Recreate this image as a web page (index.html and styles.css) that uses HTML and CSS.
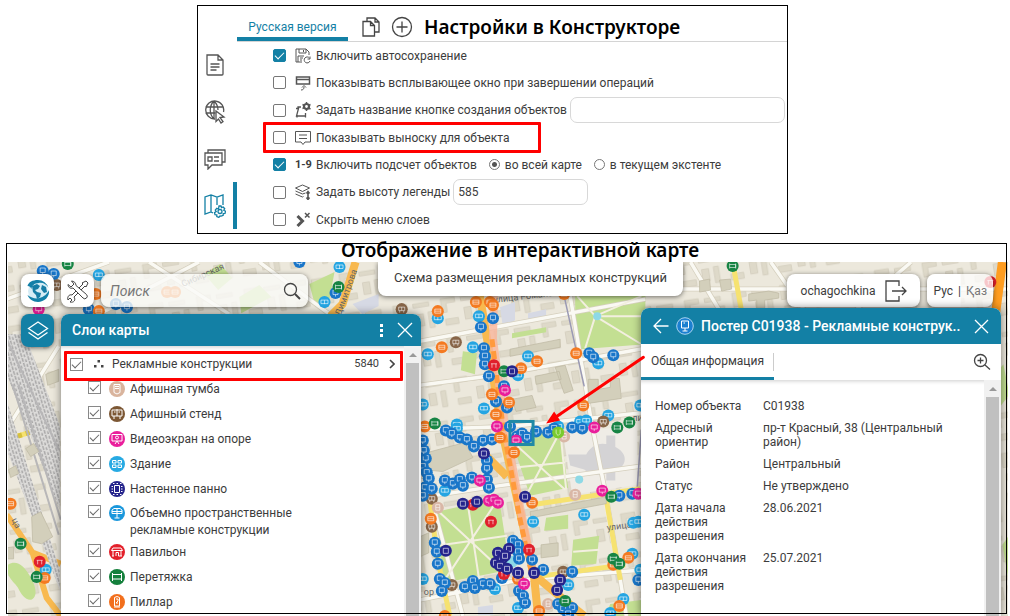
FILE: index.html
```html
<!DOCTYPE html>
<html lang="ru">
<head>
<meta charset="utf-8">
<title>Схема размещения рекламных конструкций</title>
<link rel="stylesheet" href="styles.css">
</head>
<body>
<section class="builder">
  <nav class="rail" aria-label="Разделы">
    <button class="rail-btn" aria-label="Документ"><svg width="20" height="22" viewBox="0 0 20 22"><path d="M2 1h11l5 5v14a1 1 0 0 1-1 1H3a1 1 0 0 1-1-1zM13 1v5h5M5.500 10h9M5.500 13h9M5.500 16h6"/></svg></button>
    <button class="rail-btn" aria-label="Карта"><svg width="22" height="24" viewBox="0 0 22 24"><path d="M11 19a9 9 0 1 1 8.500-7M10 1c-5 5-5 13 0 18M10 1c3 3 4 6 4 9M10 1v18M1.500 7h17M1.500 13h10"/><path d="M12 11l8 6-4 .5 3 4-2 1.500-2.500-4-2.500 2.500z" fill="#fff"/></svg></button>
    <button class="rail-btn" aria-label="Карточки"><svg width="22" height="22" viewBox="0 0 22 22"><path d="M4 5V2h17v12h-3M1 5h17v12H8l-4 4v-4H1zM4 9h4v4H4zM10 9h5M10 13h5"/></svg></button>
    <button class="rail-btn active" aria-label="Настройки карты"><svg width="22" height="24" viewBox="0 0 22 24"><path d="M9 19l-2-1-6 2V3l6-2 6 2 6-2v10M7 1v17M13 3v8"/><circle cx="16" cy="17.500" r="2"/><path d="M15 12h2l.5 1.700 1.700-.7 1.500 1.700-.9 1.600 1.700 1-.5 2-1.800.2v1.800l-2 .8L16 22l-1.200 1.400-2-.8v-1.800l-1.800-.2-.5-2 1.700-1-.9-1.600 1.500-1.700 1.700.7z"/></svg></button>
  </nav>
  <div class="settings">
    <header class="settings-head">
      <button class="lang-tab">Русская версия</button>
      <button class="plain" aria-label="Копировать"><svg class="ico" width="18" height="20" viewBox="0 0 18 20"><path d="M5 4V1h8l4 4v10h-4M1 4.500h7.500l4 4V19H1zM8.500 4.500v4h4M13 1v4h4"/></svg></button>
      <button class="plain" aria-label="Добавить"><svg class="ico" width="22" height="22" viewBox="0 0 22 22"><circle cx="11" cy="11" r="9.500"/><path d="M11 5.500v11M5.500 11h11"/></svg></button>
      <h1 class="caption">Настройки в Конструкторе</h1>
    </header>
    <div class="options">
      <label class="opt"><input class="box" type="checkbox" checked><svg class="oi" viewBox="0 0 16 16"><path d="M7 14H1V1h10l3 3v3M4 1v4h7V1M8.500 2v2M3 14V8h6M5 10h3M5 12h2"/><path d="M14.500 10a3 3 0 1 0 .5 3M15 8.500V11h-2.500"/></svg>Включить автосохранение</label>
      <label class="opt"><input class="box" type="checkbox"><svg class="oi" viewBox="0 0 16 16"><path d="M1.500 2h13v7h-13zM1.500 4.500h13" stroke-width="1.500"/><path d="M6 15c2 0 3-1 3-3M7 12.500L9 10.500l2 2"/></svg>Показывать всплывающее окно при завершении операций</label>
      <div class="opt tall"><input class="box" type="checkbox" id="nm"><svg class="oi" viewBox="0 0 16 16"><path d="M6 5H3v1.500h.5L1.500 14H10.500V11M1 6.500h3M2 13v2.500M10.500 13v2.500" stroke-width="1.300"/><circle cx="11.500" cy="4.500" r="2.500" stroke-width="2.200"/><path d="M11.500 0v2M11.500 7v2M7.500 2.500l2 1M13.500 6l2 1M15.500 2.500l-2 1M7.500 6.500l2-1" stroke-width="1.500"/></svg><label for="nm">Задать название кнопке создания объектов</label><input class="field wide" type="text" aria-label="Название кнопки"></div>
      <label class="opt marked"><input class="box" type="checkbox"><svg class="oi" viewBox="0 0 16 16"><path d="M.5 1.500h15v10.500H10L8 14.500 6 12H.5zM4 5h8M4 8.500h8"/></svg>Показывать выноску для объекта</label>
      <div class="opt"><input class="box" type="checkbox" id="cnt" checked><b class="oi num">1-9</b><label for="cnt">Включить подсчет объектов</label>
        <label class="radio"><input type="radio" name="ext" checked>во всей карте</label>
        <label class="radio"><input type="radio" name="ext">в текущем экстенте</label></div>
      <div class="opt tall"><input class="box" type="checkbox" id="hg"><svg class="oi" viewBox="0 0 16 16"><path d="M7.500 1l7 3-7 3.500-7-3.500zM.5 7l7 3 3-1M.5 10l7 3 1-.5"/><path d="M13 8v7M11.500 9.500L13 7.500l1.500 2M11.500 13.500l1.500 2 1.500-2" stroke-width="1.600"/></svg><label for="hg">Задать высоту легенды</label><input class="field" type="text" value="585" aria-label="Высота легенды"></div>
      <label class="opt"><input class="box" type="checkbox"><svg class="oi" viewBox="0 0 16 16"><path d="M2.500 4l5 5-5 5" stroke-width="3"/><path d="M10 1l4.500 4.500M14.500 1L10 5.500" stroke-width="1.500"/></svg>Скрыть меню слоев</label>
    </div>
  </div>
</section>

<section class="viewer">
  <h2 class="caption viewer-caption">Отображение в интерактивной карте</h2>
  <div class="stage">
    <svg class="map" viewBox="8 263 1000 353" preserveAspectRatio="xMidYMin slice" aria-hidden="true">
      <defs>
        <pattern id="rails" width="6" height="5" patternUnits="userSpaceOnUse" patternTransform="rotate(-17)"><rect width="6" height="5" fill="#dddcda"/><path d="M1.500 0v4M4.500 2v3" stroke="#aaa9a9" stroke-width="1.500"/></pattern>
        <pattern id="town" width="48" height="40" patternUnits="userSpaceOnUse" patternTransform="rotate(-9)"><path d="M4 5h14v5H9v9H4zM24 6h16v4H24zM26 17h7v12h-7zM38 16h5v16h-5zM6 26h13v6H6z" fill="#ded9c9" stroke="#d0cab9" stroke-width=".7"/></pattern>
      </defs>
      <rect x="0" y="250" width="1020" height="380" fill="#ece8dc"/>
      <rect x="0" y="250" width="1020" height="380" fill="url(#town)"/>
      <g fill="#c3df92">
        <path d="M575 297h70v48l-65 5-5-30zM510 436l50-5 8 57-38 8zM437 512l62-14 11 72-67 13zM463 352l14 2-2 21-14-4zM546 518l22-3v14l-24 2zM573 540l26-4-3 28-25 2zM610 604l31-4v16h-36zM470 281l20-6v15h-20zM205 275l16-10 12 14-14 12zM240 298l20-12 12 12-30 16zM310 285l25-12-5 27-14 8zM8 566c10-8 18 2 22 8s10 18 5 24-13-4-15-9-12-10-12-23zM990 380l12-15 6 30-15 20zM1001 545l7-10v50zM512 334l34-6v5l-34 6z"/>
      </g>
      <path d="M563 435l74-10v60l-65 10z" fill="#efece6"/>
      <path d="M568 455h18c4-8 12-13 22-10 22 5 22 25 0 28-10 4-18 2-24-3l-14-4z M606 436h9v45h-9z" fill="#d4d3d5"/>
      <g fill="#d6d9e4"><path d="M500 308l15-5v18l-12 7zM528 314l18-4v10l-18 4zM353 305l26-10v12l-16 8zM478 607l15-2v10h-15zM950 320l20-12v20z"/></g>
      <g fill="none" stroke="#d5cfbd" stroke-width="5"><path d="M420 342l225-42M420 386l75-10 150-27M420 430l90-3 135-14M420 498l80-12 145-20M433 504l30 112M420 600l100-20 125-10M570 297l22 130 14 70 20 119M60 347L8 430M8 300L110 263M100 315L200 263M150 263l80 52M260 263l70 52M640 290h368M690 263l30 50M770 263l35 50M850 315l60-52"/></g>
      <g fill="none" stroke="#faf9f3" stroke-width="3.500"><path d="M420 342l225-42M420 386l75-10 150-27M420 430l90-3 135-14M420 498l80-12 145-20M433 504l30 112M420 600l100-20 125-10M570 297l22 130 14 70 20 119M60 347L8 430M8 300L110 263M100 315L200 263M150 263l80 52M260 263l70 52M640 290h368M690 263l30 50M770 263l35 50M850 315l60-52"/></g>
      <path d="M602 490l14 76M437 510l73 68M499 498l-56 85M468 505l12 80M437 546l70-10M595 317l46-20M595 317l-18-20M595 317l46 28M595 317l-10 32M595 317h50M510 440l55 50M560 432l-35 66M515 468l50-5M573 552l26-2M560 430l6 60" fill="none" stroke="#f3efe0" stroke-width="2"/>
      <circle cx="597" cy="317" r="4" fill="#8ed9e6"/><circle cx="579" cy="480" r="4" fill="#8ed9e6"/><circle cx="512" cy="562" r="6" fill="#8ed9e6"/>
      <path d="M564 297l20 90M641 430l-5 70" fill="none" stroke="#9a99b4" stroke-width="1.500"/>
      <g fill="none" stroke="#f6e270" stroke-width="5"><path d="M532 505l108-16M535 577l90-12M430 500l8 60 12 56M606 500l14 80M732 263l10 55M8 440l52-16"/></g>
      <path d="M8 440l52-16" fill="none" stroke="#d7c13d" stroke-width="5" stroke-dasharray="6 4"/>
      <g fill="none" stroke="#f8b94f"><path d="M480 297l10 60 11 70 20 90 13 60 4 39M534 575l30 25 20 16M485 455l22 22M356 263l-13 42-12 12" stroke-width="8"/><path d="M8 515l26 38 14 45 14 18M32 552l30 12" stroke-width="6"/><path d="M1001 263l-8 60" stroke="#ff9d20" stroke-width="9"/></g>
      <path d="M494 297l-1 43 12 87 15 80 12 60" fill="none" stroke="#f9b59b" stroke-width="8" opacity=".8"/>
      <path d="M492 340l11 87 16 88 12 56" fill="none" stroke="#ff9a3d" stroke-width="5" stroke-dasharray="8 4"/>
      <path d="M8 335l18 0 35 90v85L8 375zM8 400l53 170v20L8 450z" fill="url(#rails)"/>
      <path d="M14 385l46 150M20 385l42 135M8 340l52 110" stroke="#b8b7b8" stroke-width="2" fill="none"/>
      <g fill="#d3cfbb" stroke="#bdb8a2" stroke-width=".7"><path d="M10 470l7-4 3 8-8 4zM27 449l8-5 5 8-8 5zM33 517l9-5 12 25-11 7-9-2zM8 548l7-1v12H8zM47 375l13-5v12l-11 4zM699 282l10-2 1 11-11 2zM719 281l11-1 1 10-10 2zM748 295l20-3 10 2v5l-14 2v8h-8v-8l-8 1zM420 455l45-12 8 15-30 14-20-2zM540 285l22-4v9l-22 4zM510 350l50-10v8l-50 9zM535 377l24-5 2 8-25 5zM555 368l10-2 8 25-9 3zM512 400l20-4 4 12-20 4zM588 380l10 0 0 10 12-2v-8l9-1 2 20-33 5zM530 512l76-15v7l-75 14zM541 545l17-2v13l-17 2zM420 537l9-4v20l-9 4z"/></g>
      <g class="map-label"><text transform="translate(184 288) rotate(-24)">Сибирская</text><text transform="translate(341 317) rotate(-70)">Димитрова</text><text transform="translate(494 304) rotate(-7)">улица Романо</text><text transform="translate(607 531) rotate(-8)">улица</text><text x="424" y="595">ор</text><text transform="translate(13 520) rotate(65)">ца</text><text x="632" y="422">ли</text></g>
      <g id="markers"></g>
      <rect x="510" y="422" width="23" height="23" fill="none" stroke="#208aa5" stroke-width="3"/>
    </svg>

    <div class="side side-left">
      <div class="toolbar">
        <button class="tile" aria-label="Главная"><svg width="24" height="26" viewBox="0 0 24 26"><circle cx="12" cy="13" r="10" fill="#d5ecf5"/><path d="M12 2a11 11 0 0 1 10.500 8c-2-4-6-6-10-5-4 0-7 3-7 6-1-2-2-3-4-3 1-4 5-6 10.500-6zM23 12c1 7-5 12-11 12-5 0-9-3-10.500-7 4 3 8 4 12 3s8-4 9.500-8z" fill="#1380a8"/><path d="M6 8l5-2 3 2-2 3-3 1 2 2 4 1-1 4-3 2-1-4-3-3zM16 7l4 2 1 5-3 1-3-4z" fill="#167da5"/></svg></button>
        <button class="tile" aria-label="Инструменты"><svg class="ico thin" width="24" height="24" viewBox="0 0 24 24"><path d="M7 9l10 10a2.300 2.300 0 0 0 3.500-3.500L10 6.500C10 4 8 2 5.500 2L8 5 5 8 2 5.500C2 8 4 10 7 9zM13 9l4-4-1-1 4-2 2 2-2 4-1-1-4 4M10 12l-4 4c-3-1-5 2-4 5l2-2 2 2-2 2c4 1 6-2 4-5l4-4"/></svg></button>
        <div class="search"><input type="text" placeholder="Поиск" aria-label="Поиск"><button class="plain" aria-label="Найти"><svg class="ico" width="18" height="18" viewBox="0 0 18 18"><circle cx="7.500" cy="7.500" r="6"/><path d="M12 12l5 5" stroke-width="2"/></svg></button></div>
      </div>
      <div class="layers-row">
        <button class="tile teal" aria-label="Слои"><svg width="22" height="22" viewBox="0 0 22 22"><path d="M11 2l9.500 6.500L11 15 1.500 8.500zM1.500 12.500L11 19l9.500-6.500"/></svg></button>
        <section class="panel">
          <header class="panel-head layers-head"><h3>Слои карты</h3>
            <button class="plain" aria-label="Меню"><svg width="3" height="13" viewBox="0 0 3 13"><path d="M0 0h3v3H0zM0 5h3v3H0zM0 10h3v3H0z" fill="#fff" stroke="none"/></svg></button>
            <button class="plain" aria-label="Закрыть"><svg width="16" height="16" viewBox="0 0 16 16"><path d="M1 1l14 14M15 1L1 15"/></svg></button></header>
          <div class="panel-body">
            <div class="tree">
              <label class="group marked"><input class="check" type="checkbox" checked><svg width="10" height="10" viewBox="0 0 10 10"><path d="M0 6h2.500v2.500H0zM3.500 1H6v2.500H3.500zM7 6h2.500v2.500H7z" fill="#444"/></svg><span class="grow">Рекламные конструкции</span><span class="count">5840</span><svg class="ico" width="6" height="10" viewBox="0 0 6 10"><path d="M1 1l4 4-4 4" stroke-width="1.600"/></svg></label>
              <label class="leaf"><input class="check" type="checkbox" checked><svg class="dot" viewBox="0 0 16 16"><circle cx="8" cy="8" r="8" fill="#d9b49d"/><path d="M5 3.500h6v8l-3 1.500-3-1.500zM6 5.500h4M6 7.500h4"/></svg><span>Афишная тумба</span></label>
              <label class="leaf"><input class="check" type="checkbox" checked><svg class="dot" viewBox="0 0 16 16"><circle cx="8" cy="8" r="8" fill="#7c5734"/><path d="M3 4h10v6H3zM8 3v7M5 10v3M11 10v3M5 6h1.500M9.500 6H11"/></svg><span>Афишный стенд</span></label>
              <label class="leaf"><input class="check" type="checkbox" checked><svg class="dot" viewBox="0 0 16 16"><circle cx="8" cy="8" r="8" fill="#ea1f9c"/><path d="M3 3.500h10v6.500H3zM6 13l2-3 2 3"/><circle cx="8" cy="6.500" r="1.500"/></svg><span>Видеоэкран на опоре</span></label>
              <label class="leaf"><input class="check" type="checkbox" checked><svg class="dot" viewBox="0 0 16 16"><circle cx="8" cy="8" r="8" fill="#27aae3"/><path d="M3.500 4.500h3.500v2.500H3.500zM9 4.500h3.500v2.500H9zM3.500 9h3.500v2.500H3.500zM9 9h3.500v2.500H9z"/></svg><span>Здание</span></label>
              <label class="leaf"><input class="check" type="checkbox" checked><svg class="dot" viewBox="0 0 16 16"><circle cx="8" cy="8" r="8" fill="#25248c"/><path d="M5.500 4.500h5v7h-5zM4 2.500h1.500M7.500 2.500h1.500M11 2.500h1.500M2.500 5.500H4M12 5.500h1.500M2.500 8H4M12 8h1.500M2.500 10.500H4M12 10.500h1.500M4 13.500h1.500M7.500 13.500h1.500M11 13.500h1.500"/></svg><span>Настенное панно</span></label>
              <label class="leaf two"><input class="check" type="checkbox" checked><svg class="dot" viewBox="0 0 16 16"><circle cx="8" cy="8" r="8" fill="#1a97dc"/><path d="M3 5l2-1.500h6L13 5v3.500H3zM8 3.500V13M5.500 13h5M3 6.500h10"/></svg><span>Объемно пространственные<br>рекламные конструкции</span></label>
              <label class="leaf"><input class="check" type="checkbox" checked><svg class="dot" viewBox="0 0 16 16"><circle cx="8" cy="8" r="8" fill="#e3202b"/><path d="M2.500 6.500L4 4h8l1.500 2.500zM4 7v5M12 7v5M7 12V8.500h2.500V12M3 12h2M9.500 12H13"/></svg><span>Павильон</span></label>
              <label class="leaf"><input class="check" type="checkbox" checked><svg class="dot" viewBox="0 0 16 16"><circle cx="8" cy="8" r="8" fill="#14803c"/><path d="M3.500 4v8M12.500 4v8M3.500 5.500h9M3.500 10h9"/></svg><span>Перетяжка</span></label>
              <label class="leaf"><input class="check" type="checkbox" checked><svg class="dot" viewBox="0 0 16 16"><circle cx="8" cy="8" r="8" fill="#f26f1d"/><path d="M5.500 3.500q2.500-2 5 0v8.500h-5zM5 13h6M7 5h2v2l-2 2h2"/></svg><span>Пиллар</span></label>
            </div>
            <div class="scroll" aria-hidden="true"><i class="up"></i><i class="thumb"></i></div>
          </div>
        </section>
      </div>
    </div>

    <h3 class="map-title">Схема размещения рекламных конструкций</h3>

    <div class="side side-right">
      <div class="toolbar account">
        <button class="pill">ochagochkina<svg class="ico" width="22" height="22" viewBox="0 0 22 22"><path d="M14 6V1H1v20h13v-5M7 11h14M17 7l4 4-4 4"/></svg></button>
        <div class="pill langs"><a href="#rus">Рус</a><span>|</span><a href="#kaz" class="dim">Қаз</a></div>
      </div>
      <section class="panel">
        <header class="panel-head info-head">
          <button class="plain" aria-label="Назад"><svg width="16" height="16" viewBox="0 0 16 16"><path d="M15.500 8H1M8 1L1 8l7 7"/></svg></button>
          <svg class="dot" viewBox="0 0 18 18"><g><circle cx="9" cy="9" r="8.300" fill="#1b7fd0"/></g><circle class="ring" cx="9" cy="9" r="8.300"/><path d="M5.500 4h7v7h-7zM9 11v3M6.500 14h5M7.500 6H9"/></svg>
          <h3>Постер С01938 - Рекламные конструк..</h3>
          <button class="plain" aria-label="Закрыть"><svg width="15" height="15" viewBox="0 0 15 15"><path d="M1 1l13 13M14 1L1 14"/></svg></button></header>
        <div class="tabs"><button class="info-tab">Общая информация</button><i class="sep"></i><button class="plain" aria-label="Приблизить"><svg class="ico" width="18" height="18" viewBox="0 0 18 18"><circle cx="7.500" cy="7.500" r="6"/><path d="M12 12l5 4.500M4.500 7.500h6M7.500 4.500v6"/></svg></button></div>
        <div class="panel-body">
          <table class="facts">
            <tr><th>Номер объекта</th><td>С01938</td></tr>
            <tr><th>Адресный ориентир</th><td>пр-т Красный, 38 (Центральный район)</td></tr>
            <tr><th>Район</th><td>Центральный</td></tr>
            <tr><th>Статус</th><td>Не утверждено</td></tr>
            <tr><th>Дата начала действия разрешения</th><td>28.06.2021</td></tr>
            <tr><th>Дата окончания действия разрешения</th><td>25.07.2021</td></tr>
          </table>
          <div class="scroll" aria-hidden="true"><i class="up"></i><i class="thumb"></i></div>
        </div>
      </section>
    </div>

    <svg class="map arrow" viewBox="8 263 1000 353" preserveAspectRatio="xMidYMin slice" aria-hidden="true"><path d="M643 358L555 418" stroke="#f00" stroke-width="3" stroke-linecap="round"/><path d="M546 424l8-12 6 9z" fill="#f00"/></svg>
  </div>
</section>
<script src="map.js"></script>
</body>
</html>
```
FILE: styles.css
```css
*, *::before, *::after { box-sizing: border-box; }
body {
  margin: 0;
  min-height: 100vh;
  display: flex;
  flex-direction: column;
  background: #fff;
  color: #3c3c3c;
  font: 12px/16px Roboto, "Noto Sans", sans-serif;
}
h1, h2, h3 { margin: 0; font-weight: 500; }
button, input { font: inherit; color: inherit; }
button { padding: 0; border: 0; background: none; cursor: pointer; }
a { color: inherit; text-decoration: none; }
svg { display: block; flex: none; fill: none; }
.plain { flex: none; }
.ico { stroke: #444; stroke-width: 1.3; }
.ico.thin { stroke-width: 1; }
.caption { color: #000; font: 600 19px/20px "Noto Sans", sans-serif; }

.builder {
  display: flex;
  margin: 5px 22% 9px 19.5%;
  border: 1px solid #000;
}
.rail { width: 39px; flex: none; padding-top: 35px; display: flex; flex-direction: column; }
.rail-btn {
  height: 47px;
  display: flex;
  align-items: center;
  justify-content: center;
  padding-right: 1px;
  border-right: 4px solid transparent;
}
.rail-btn svg { stroke: #555; stroke-width: 1.3; }
.rail-btn.active { border-color: #1380a5; }
.rail-btn.active svg { stroke: #1380a5; }
.settings { flex: 1; min-width: 0; }
.settings-head {
  height: 36px;
  display: flex;
  align-items: center;
  gap: 11px;
  padding-top: 7px;
  border-bottom: 1px solid #d4d4d4;
}
.lang-tab {
  align-self: stretch;
  width: 111px;
  padding-top: 4px;
  color: #1380a5;
  border-bottom: 4px solid #1380a5;
}
.settings-head .lang-tab { margin-right: 3px; }
.opt { position: relative; display: flex; align-items: center; height: 27px; padding-left: 36px; }
.opt.tall { height: 28px; }
.box {
  appearance: none;
  flex: none;
  width: 13px;
  height: 13px;
  margin: 0 9px 0 0;
  border: 1px solid #777;
  border-radius: 2px;
  background: #fff;
  display: grid;
  place-items: center;
}
.box:checked { background: #1380a5; border-color: #1380a5; }
.box:checked::after {
  content: "";
  width: 9px;
  height: 5px;
  margin-bottom: 2px;
  border: solid #fff;
  border-width: 0 0 1px 1px;
  transform: rotate(-45deg);
}
.oi { width: 16px; height: 16px; margin-right: 5px; stroke: #555; }
.num { font-size: 11px; white-space: nowrap; }
.field {
  width: 135px;
  height: 26px;
  margin-left: 3px;
  padding: 0 4px;
  border: 1px solid #d8d8d8;
  border-radius: 7px;
  background: #fff;
}
.field.wide { flex: 1; min-width: 0; margin-right: 2px; }
.radio { display: flex; align-items: center; gap: 5px; margin-left: 12px; }
.radio input {
  appearance: none;
  width: 11px;
  height: 11px;
  margin: 0;
  border: 1px solid #777;
  border-radius: 50%;
}
.radio input:checked { background: radial-gradient(#555 2px, #fff 3px); }
.marked::after { content: ""; position: absolute; border: 3px solid #f00; border-radius: 1px; }
.opt.marked::after { left: 26px; width: 278px; top: -2px; height: 31px; }

.viewer { position: relative; flex: 1; display: flex; flex-direction: column; margin: 0 2px 0 6px; }
.viewer::after {
  content: "";
  position: absolute;
  z-index: 4;
  inset: 0 1px 2px 0;
  border: 1px solid #000;
  pointer-events: none;
}
.viewer-caption { height: 19px; line-height: 15px; padding-left: 26px; text-align: center; }
.stage {
  position: relative;
  flex: 1;
  display: flex;
  justify-content: space-between;
  margin-left: 2px;
  padding: 12px 7px 0 13px;
  overflow: hidden;
}
.map { position: absolute; inset: 0; width: 100%; height: 100%; }
.arrow { z-index: 3; pointer-events: none; }
.map-label { fill: #666; font-size: 9px; stroke: none; }
.side { position: relative; display: flex; flex-direction: column; }
.side-left { width: 400px; gap: 7px; }
.side-right { width: 360px; gap: 1px; }
.toolbar { display: flex; gap: 7px; }
.tile, .pill, .search, .map-title {
  background: #fff;
  border-radius: 8px;
  box-shadow: 0 1px 5px rgba(0, 0, 0, .55);
}
.tile { width: 33px; height: 33px; display: grid; place-items: center; flex: none; }
.teal { background: #1380a5; }
.teal svg, .panel-head svg { stroke: #fff; stroke-width: 1.3; }
.search {
  width: 207px;
  height: 33px;
  display: flex;
  align-items: center;
  padding: 0 7px 0 9px;
  background: rgba(250, 250, 247, .8);
}
.search input {
  flex: 1;
  min-width: 0;
  border: 0;
  background: none;
  padding: 0;
  outline: 0;
  font-size: 14px;
  font-style: italic;
}
.search input::placeholder { color: #777; }
.layers-row { flex: 1; display: flex; gap: 7px; align-items: flex-start; }
.layers-row .panel { align-self: stretch; }
.panel {
  flex: 1;
  min-width: 0;
  display: flex;
  flex-direction: column;
  background: #fff;
  border-radius: 8px 8px 0 0;
  box-shadow: 0 0 8px rgba(0, 0, 0, .5);
}
.panel-head {
  display: flex;
  align-items: center;
  color: #fff;
  background: #1380a5;
  border-radius: 8px 8px 0 0;
  font-size: 14px;
}
.panel-head h3 { flex: 1; font-size: 14px; white-space: nowrap; }
.layers-head { height: 32px; padding: 0 8px 0 11px; gap: 14px; }
.info-head { height: 36px; padding: 0 12px; gap: 7px; }
.info-head .plain:last-child { margin-left: -20px; }
.panel-body { flex: 1; display: flex; box-shadow: inset 0 4px 4px -3px rgba(0, 0, 0, .2); }
.tree { flex: 1; padding-top: 5px; }
.group {
  position: relative;
  display: flex;
  align-items: center;
  height: 26px;
  padding: 0 9px;
}
.group svg:first-of-type { margin: 0 8px 0 11px; }
.group .count { margin-right: 10px; font-size: 11px; }
.group.marked::after { inset: 0 1px -4px 3px; }
.grow { flex: 1; }
.leaf { display: flex; gap: 8px; padding: 4px 0 4px 27px; line-height: 17px; }
.leaf.two { padding: 3px 0 1px 27px; }
.leaf .dot { margin-right: -3px; }
.check {
  appearance: none;
  flex: none;
  width: 13px;
  height: 13px;
  margin: 0;
  border: 1px solid #888;
  display: grid;
  place-items: center;
}
.check:checked::after {
  content: "";
  width: 9px;
  height: 5px;
  margin-bottom: 2px;
  border: solid #666;
  border-width: 0 0 1px 1px;
  transform: rotate(-45deg);
}
.dot { width: 16px; height: 16px; stroke: #fff; stroke-width: 1; }
.dot circle:first-child { stroke: none; }
.info-head .dot { width: 18px; height: 18px; stroke-width: 1; }
.ring { stroke: #a9d3f0; }
.scroll {
  width: 17px;
  padding: 0 2px;
  background: #f1f1f1;
  display: flex;
  flex-direction: column;
  align-items: center;
}
.up { margin: 7px 0 6px; border: 4px solid transparent; border-top: 0; border-bottom-color: #999; }
.thumb { flex: 1; width: 100%; background: #c0c0c0; }
.map-title {
  position: absolute;
  z-index: 2;
  left: 37%;
  top: 0;
  height: 34px;
  padding: 0 16px;
  border-radius: 0 0 8px 8px;
  font: 400 13px/31px Roboto, sans-serif;
  white-space: nowrap;
}
.account { justify-content: flex-end; padding-right: 8px; }
.pill {
  height: 33px;
  display: flex;
  align-items: center;
  gap: 10px;
  padding: 0 13px 0 14px;
}
.langs { gap: 5px; padding: 0 6px; background: linear-gradient(90deg, #fff 50%, rgba(255, 255, 255, .75) 52%); }
.dim { color: #777; }
.tabs { height: 36px; display: flex; align-items: stretch; padding-right: 10px; }
.info-tab { width: 133px; border-bottom: 3px solid #1380a5; }
.sep { flex: 1; margin: 9px 0; border-left: 1px solid #ccc; margin-left: -1px; }
.facts {
  flex: 1;
  margin: 15px 16px 0 14px;
  align-self: flex-start;
  border-collapse: collapse;
  line-height: 14px;
}
.facts th, .facts td { padding: 4px 0; vertical-align: top; text-align: left; font-weight: 400; }
.facts th { width: 108px; padding-right: 14px; }
.facts td { padding-right: 16px; }
```
FILE: map.js
```js
const colors = {
  blue: "#1976c9", cyan: "#25a5e2", orange: "#f47a21", navy: "#25248c", magenta: "#e91e9b",
  red: "#e0202c", green: "#178444", brown: "#876548", rose: "#d9b7a6", lime: "#7acb2e"
};
const glyphs = {
  blue: "M-2.500-3h5v4.500h-5zM0 1.500v2",
  cyan: "M-3.500-2h7v3.500h-7zM0-2v4",
  orange: "M-3-2h6v4h-6zM-3 0h6",
  navy: "M-2.500-2.500h5v5h-5z",
  magenta: "M-3-2.500h6v4h-6zM0 1.500v2",
  red: "M-3-1.500h6M-2-1.500v4M2-1.500v4",
  green: "M-3-2.500v5M3-2.500v5M-3-1.500h6v3h-6",
  brown: "M-3-2h6v3.500h-6zM0-2v3.500M-2 1.500v2M2 1.500v2",
  rose: "M-2-3h4v5.500h-4zM-2 0h4",
  lime: "M-2-3v4l2 2 2-2v-4"
};
const points = {
  cyan: "438,319 479,317 428,355 473,348 528,357 598,364 518,376 484,409 423,405 457,425 608,416 580,422 586,421 558,427 457,429 445,491 533,522 584,515 633,523 638,522 632,554 640,570 495,589 568,585 623,599 518,608 610,613 423,579 100,276 340,268 325,303 47,570 640,406",
  brown: "456,343 603,422 432,499 432,527 452,585 563,572 58,286 402,310",
  rose: "438,508 575,495 548,604 564,437",
  blue: "493,319 481,328 484,349 485,357 485,365 489,377 504,387 507,408 589,354 593,358 613,356 496,402 510,427 582,429 446,431 452,434 460,438 467,440 474,447 483,441 492,440 517,437 522,434 527,438 536,432 548,433 554,429 572,428 423,441 426,459 424,451 423,467 427,473 429,479 425,488 432,489 423,496 445,481 453,484 460,480 463,486 472,478 487,461 487,469 487,480 489,488 619,496 632,494 435,543 437,552 438,564 440,579 445,583 442,591 465,587 473,581 475,588 483,584 490,584 502,578 513,541 518,545 518,552 519,559 532,560 543,570 572,572 519,591 523,596 525,603 558,604 563,609 572,608 568,614 44,272 55,275 90,310 117,305 128,308 300,263 336,294 638,580",
  orange: "438,312 476,303 490,303 493,306 442,348 576,354 537,362 521,369 492,395 496,415 509,403 583,406 425,427 500,438 514,453 532,503 431,519 628,558 613,565 518,579 539,611 619,606 445,616 97,295 100,312 12,504 46,578 168,293 176,293 564,295",
  magenta: "505,391 497,427 480,481 489,501 494,500 498,503 516,441 602,491 524,584 594,428 40,310 638,494",
  green: "504,372 435,424 629,423 617,428 611,497 613,559 619,564 565,601 69,265 22,544 38,577 339,288 732,267",
  red: "494,366 473,505 491,522 529,550 504,574 41,562 989,283",
  navy: "512,372 484,454 463,504 477,502 525,497 446,551 498,553 509,549 496,563 502,559 500,566 507,569 505,556 518,573 534,573 560,580 557,590",
  lime: "558,433"
};
const layer = document.getElementById("markers");
for (const [kind, list] of Object.entries(points)) {
  for (const point of list.split(" ")) {
    const [x, y] = point.split(",");
    layer.insertAdjacentHTML("beforeend",
      `<g transform="translate(${x} ${y})"><circle r="6" fill="${colors[kind]}"/><path d="${glyphs[kind]}" stroke="#fff" stroke-width=".8" stroke-opacity=".75"/></g>`);
  }
}
```
